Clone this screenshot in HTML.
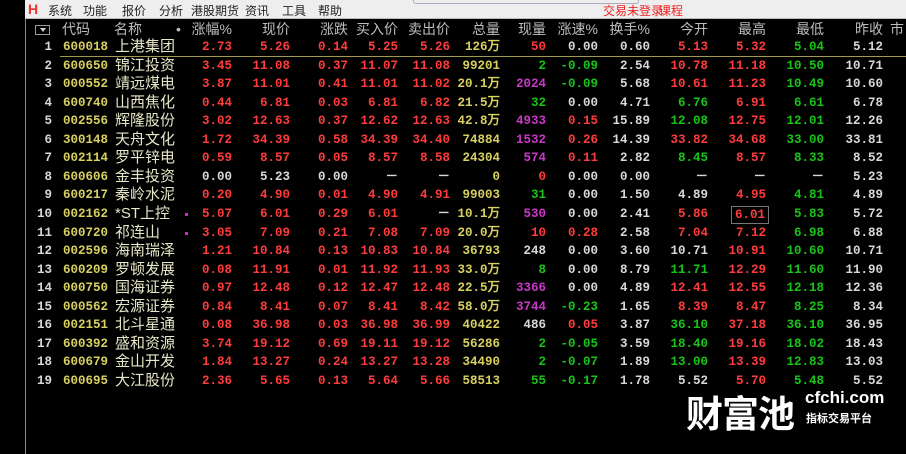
<!DOCTYPE html>
<html><head><meta charset="utf-8">
<style>
*{margin:0;padding:0;box-sizing:border-box}
body{width:906px;height:454px;background:#000;overflow:hidden;position:relative;font-family:"Liberation Sans","Noto Sans CJK SC",sans-serif}
#menu{position:absolute;left:25px;top:0;width:881px;height:19px;background:#eeeeee;border-bottom:1px solid #bbb}
#menu span{position:absolute;top:2px;font-size:12px;color:#222}
#vline{position:absolute;left:25px;top:19px;width:1px;height:435px;background:#888}
.row{position:absolute;left:0;width:906px;height:18.55px}
.c{position:absolute;top:0;line-height:18.55px;white-space:nowrap}
.n{font-family:"Liberation Mono","DejaVu Sans Mono",monospace;font-weight:bold;font-size:12.5px;text-align:right}
.hd{font-size:14px;color:#bdbdbd;text-align:right;line-height:18px}
.r{color:#ff3b3b}.g{color:#18c418}.w{color:#d8d8d8}.y{color:#d8d060}.p{color:#c838c8}
.nm{font-size:15px;color:#e6e6c8;font-family:"Liberation Sans","Noto Sans CJK SC",sans-serif}
</style></head><body>
<div id="menu">
<span style="left:3px;top:1px;font-weight:bold;color:#e33;font-size:14px">H</span>
<span style="left:23px">系统</span><span style="left:58px">功能</span><span style="left:97px">报价</span><span style="left:134px">分析</span><span style="left:166px">港股期货</span><span style="left:220px">资讯</span><span style="left:257px">工具</span><span style="left:293px">帮助</span>
<div style="position:absolute;left:388px;top:-4px;width:226px;height:8px;border:1px solid #aab;border-radius:3px"></div>
<span style="left:578px;color:#e22">交易未登录</span><span style="left:634px;color:#e22">课程</span>
</div>
<div id="vline"></div>
<div style="position:absolute;left:60px;top:56px;width:846px;height:1px;background:#a09a50"></div>
<div id="t"></div>
<div style="position:absolute;left:686px;top:384px;font-size:37px;font-weight:bold;color:#fff;letter-spacing:-1px">财富池</div>
<div style="position:absolute;left:805px;top:388px;font-size:17px;font-weight:bold;color:#fff">cfchi.com</div>
<div style="position:absolute;left:806px;top:410px;font-size:11px;font-weight:bold;color:#fff">指标交易平台</div>
<script>
var R=[232,290,348,398,450,500,546,598,650,708,766,824,883];
var H=["涨幅%","现价","涨跌","买入价","卖出价","总量","现量","涨速%","换手%","今开","最高","最低","昨收"];
var D=[
["600018","上港集团","","2.73r 5.26r 0.14r 5.25r 5.26r 126万y 50r 0.00w 0.60w 5.13r 5.32r 5.04g 5.12w"],
["600650","锦江投资","","3.45r 11.08r 0.37r 11.07r 11.08r 99201y 2g -0.09g 2.54w 10.78r 11.18r 10.50g 10.71w"],
["000552","靖远煤电","","3.87r 11.01r 0.41r 11.01r 11.02r 20.1万y 2024p -0.09g 5.68w 10.61r 11.23r 10.49g 10.60w"],
["600740","山西焦化","","0.44r 6.81r 0.03r 6.81r 6.82r 21.5万y 32g 0.00w 4.71w 6.76g 6.91r 6.61g 6.78w"],
["002556","辉隆股份","","3.02r 12.63r 0.37r 12.62r 12.63r 42.8万y 4933p 0.15r 15.89w 12.08g 12.75r 12.01g 12.26w"],
["300148","天舟文化","","1.72r 34.39r 0.58r 34.39r 34.40r 74884y 1532p 0.26r 14.39w 33.82r 34.68r 33.00g 33.81w"],
["002114","罗平锌电","","0.59r 8.57r 0.05r 8.57r 8.58r 24304y 574p 0.11r 2.82w 8.45g 8.57r 8.33g 8.52w"],
["600606","金丰投资","","0.00w 5.23w 0.00w －w －w 0y 0r 0.00w 0.00w －w －w －w 5.23w"],
["600217","秦岭水泥","","0.20r 4.90r 0.01r 4.90r 4.91r 99003y 31g 0.00w 1.50w 4.89w 4.95r 4.81g 4.89w"],
["002162","*ST上控","1","5.07r 6.01r 0.29r 6.01r －w 10.1万y 530p 0.00w 2.41w 5.86r 6.01r 5.83g 5.72w"],
["600720","祁连山","1","3.05r 7.09r 0.21r 7.08r 7.09r 20.0万y 10r 0.28r 2.58w 7.04r 7.12r 6.98g 6.88w"],
["002596","海南瑞泽","","1.21r 10.84r 0.13r 10.83r 10.84r 36793y 248w 0.00w 3.60w 10.71w 10.91r 10.60g 10.71w"],
["600209","罗顿发展","","0.08r 11.91r 0.01r 11.92r 11.93r 33.0万y 8g 0.00w 8.79w 11.71g 12.29r 11.60g 11.90w"],
["000750","国海证券","","0.97r 12.48r 0.12r 12.47r 12.48r 22.5万y 3366p 0.00w 4.89w 12.41r 12.55r 12.18g 12.36w"],
["000562","宏源证券","","0.84r 8.41r 0.07r 8.41r 8.42r 58.0万y 3744p -0.23g 1.65w 8.39r 8.47r 8.25g 8.34w"],
["002151","北斗星通","","0.08r 36.98r 0.03r 36.98r 36.99r 40422y 486w 0.05r 3.87w 36.10g 37.18r 36.10g 36.95w"],
["600392","盛和资源","","3.74r 19.12r 0.69r 19.11r 19.12r 56286y 2g -0.05g 3.59w 18.40g 19.16r 18.02g 18.43w"],
["600679","金山开发","","1.84r 13.27r 0.24r 13.27r 13.28r 34490y 2g -0.07g 1.89w 13.00g 13.39r 12.83g 13.03w"],
["600695","大江股份","","2.36r 5.65r 0.13r 5.64r 5.66r 58513y 55g -0.17g 1.78w 5.52w 5.70r 5.48g 5.52w"]];
var h='<div class="row" style="top:20px">';
h+='<div class="c" style="left:35px;top:5px;width:15px;height:10px;border:1px solid #999"></div><div class="c" style="left:40px;top:8px;width:0;height:0;border-left:3px solid transparent;border-right:3px solid transparent;border-top:4px solid #ccc"></div>';
h+='<div class="c hd" style="left:62px">代码</div><div class="c hd" style="left:114px">名称</div><div class="c hd" style="left:176px">•</div>';
for(var i=0;i<13;i++)h+='<div class="c hd" style="right:'+(906-R[i])+'px">'+H[i]+'</div>';
h+='<div class="c hd" style="left:890px">市</div></div>';
for(var j=0;j<D.length;j++){var d=D[j];var ty=38+j*18.55;
h+='<div class="row" style="top:'+ty.toFixed(2)+'px">';
h+='<div class="c n w" style="right:'+(906-52)+'px">'+(j+1)+'</div>';
h+='<div class="c n y" style="left:63px">'+d[0]+'</div>';
h+='<div class="c nm" style="left:115px">'+d[1]+'</div>';
if(d[2])h+='<div class="c" style="left:185px;top:8px;width:3px;height:3px;background:#c030c0"></div>';
var v=d[3].split(' ');
for(var i=0;i<13;i++){var s=v[i];var col=s.slice(-1);var t=s.slice(0,-1);
var ex='';if(j==9&&i==10)ex='border:1px solid #777;padding:0 3px;line-height:16px;top:1px;';
h+='<div class="c n '+col+'" style="'+ex+'right:'+(906-R[i]-(ex?3:0))+'px">'+t+'</div>';}
h+='</div>';}
document.getElementById('t').innerHTML=h;
</script>
</body></html>
